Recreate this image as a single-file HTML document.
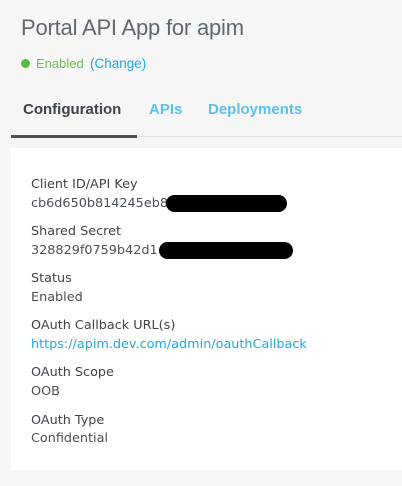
<!DOCTYPE html>
<html><head><style>
body{margin:0;width:402px;height:486px;background:#f6f6f6;font-family:"Liberation Sans",sans-serif;position:relative;overflow:hidden}
.a{position:absolute;white-space:nowrap}
.title{left:21px;top:15px;font-size:22px;color:#5f6770;font-weight:300;letter-spacing:-0.2px}
.dot{left:21px;top:59px;width:9px;height:9px;border-radius:50%;background:#5bb947}
.en{left:36px;top:56px;font-size:13px;color:#6cc04a}
.ch{left:90px;top:56px;font-size:13.5px;color:#1fa8e0}
.tab{top:101px;font-size:15px;font-weight:bold}
.card{left:11px;top:148px;width:391px;height:322px;background:#fff}
.l,.v{font-family:"DejaVu Sans",sans-serif;font-size:12.8px}
.l{left:31px;color:#3d4349}
.v{left:31px;color:#4a5057}
.blk{background:#000;border-radius:9px;height:17px}
</style></head><body>
<div class="a title">Portal API App for apim</div>
<div class="a dot"></div>
<div class="a en">Enabled</div>
<div class="a ch">(Change)</div>
<div class="a tab" style="left:23px;color:#3d4349">Configuration</div>
<div class="a tab" style="left:149px;color:#5bc0eb">APIs</div>
<div class="a tab" style="left:208px;color:#5bc0eb">Deployments</div>
<div class="a" style="left:11px;top:136px;width:391px;height:1px;background:#ddd"></div>
<div class="a" style="left:11px;top:135px;width:126px;height:3px;background:#4a5057"></div>
<div class="a card"></div>
<div class="a l" style="top:177px">Client ID/API Key</div>
<div class="a v" style="top:196px">cb6d650b814245eb8</div>
<div class="a blk" style="left:166px;top:195px;width:121px"></div>
<div class="a l" style="top:224px">Shared Secret</div>
<div class="a v" style="top:243px">328829f0759b42d1</div>
<div class="a blk" style="left:159px;top:242px;width:134px"></div>
<div class="a l" style="top:271px">Status</div>
<div class="a v" style="top:290px">Enabled</div>
<div class="a l" style="top:318px">OAuth Callback URL(s)</div>
<div class="a v" style="top:337px;color:#1fa8e0">https://apim.dev.com/admin/oauthCallback</div>
<div class="a l" style="top:365px">OAuth Scope</div>
<div class="a v" style="top:384px">OOB</div>
<div class="a l" style="top:413px">OAuth Type</div>
<div class="a v" style="top:431px">Confidential</div>
</body></html>
